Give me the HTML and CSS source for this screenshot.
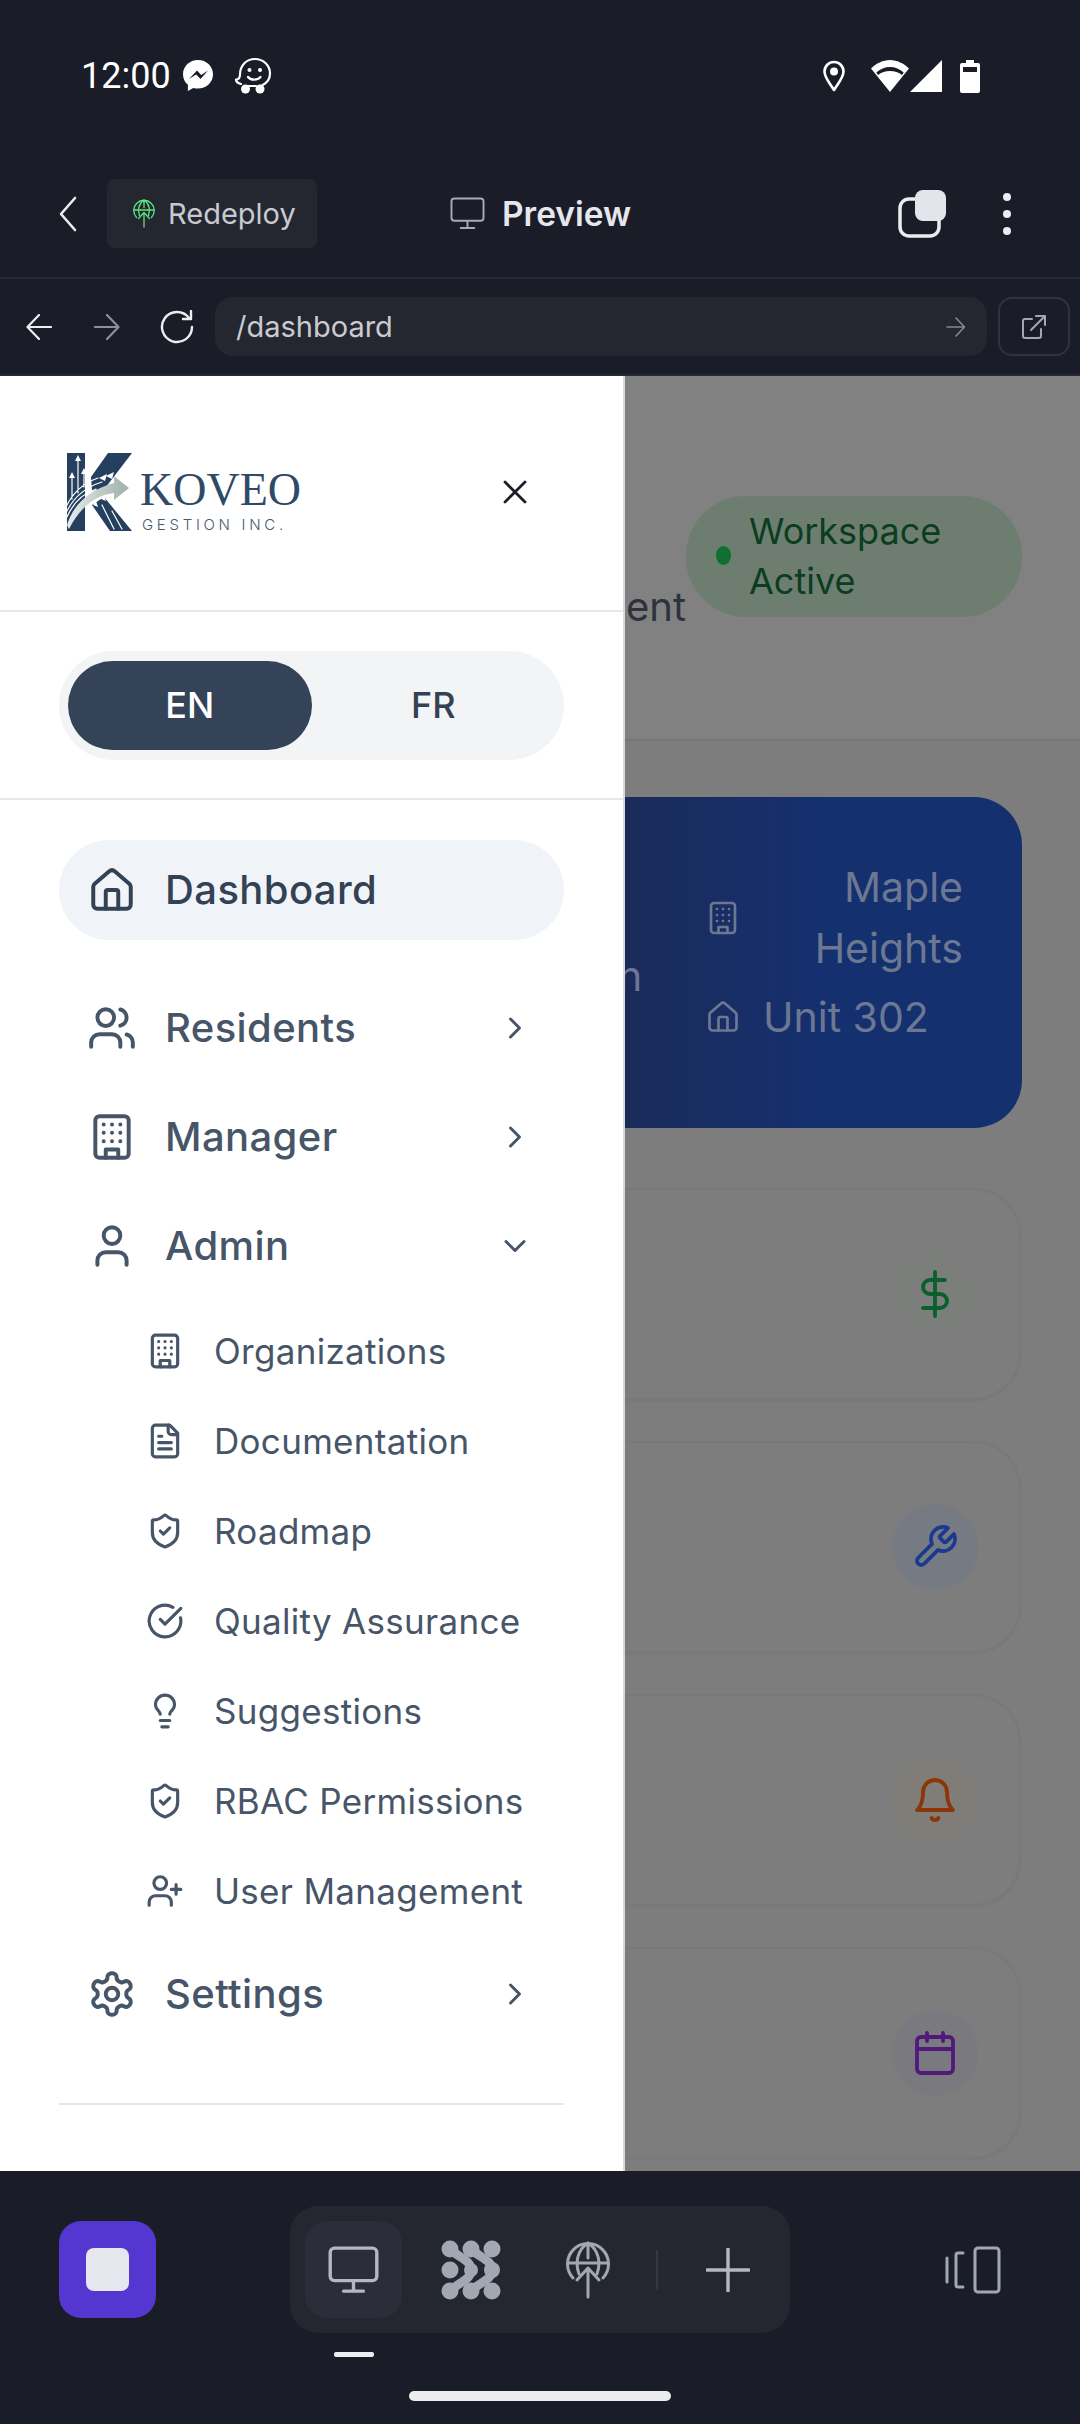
FILE: index.html
```html
<!DOCTYPE html>
<html lang="en">
<head>
  <meta charset="UTF-8">
  <title>Koveo Gestion - Preview</title>
  <meta name="viewport" content="width=device-width, initial-scale=1.0">
  <link rel="stylesheet" href="styles.css">
</head>
<body>
  <svg class="sprite" width="0" height="0">
    <symbol id="i-home" viewBox="0 0 24 24"><path d="M3 10.5a2 2 0 0 1 .7-1.5l7-6a2 2 0 0 1 2.6 0l7 6a2 2 0 0 1 .7 1.5V19a2 2 0 0 1-2 2H5a2 2 0 0 1-2-2z"/><path d="M9 21v-8a1 1 0 0 1 1-1h4a1 1 0 0 1 1 1v8"/></symbol>
    <symbol id="i-users" viewBox="0 0 24 24"><path d="M16 21v-2a4 4 0 0 0-4-4H6a4 4 0 0 0-4 4v2"/><circle cx="9" cy="7" r="4"/><path d="M22 21v-2a4 4 0 0 0-3-3.87"/><path d="M16 3.13a4 4 0 0 1 0 7.75"/></symbol>
    <symbol id="i-building" viewBox="0 0 24 24"><rect width="16" height="20" x="4" y="2" rx="2" ry="2"/><path d="M9 22v-4h6v4"/><path d="M8 6h.01M16 6h.01M12 6h.01M12 10h.01M12 14h.01M16 10h.01M16 14h.01M8 10h.01M8 14h.01"/></symbol>
    <symbol id="i-user" viewBox="0 0 24 24"><path d="M19 21v-2a4 4 0 0 0-4-4H9a4 4 0 0 0-4 4v2"/><circle cx="12" cy="7" r="4"/></symbol>
    <symbol id="i-gear" viewBox="0 0 24 24"><path d="M12.22 2h-.44a2 2 0 0 0-2 2v.18a2 2 0 0 1-1 1.73l-.43.25a2 2 0 0 1-2 0l-.15-.08a2 2 0 0 0-2.73.73l-.22.38a2 2 0 0 0 .73 2.73l.15.1a2 2 0 0 1 1 1.72v.51a2 2 0 0 1-1 1.74l-.15.09a2 2 0 0 0-.73 2.73l.22.38a2 2 0 0 0 2.73.73l.15-.08a2 2 0 0 1 2 0l.43.25a2 2 0 0 1 1 1.73V20a2 2 0 0 0 2 2h.44a2 2 0 0 0 2-2v-.18a2 2 0 0 1 1-1.73l.43-.25a2 2 0 0 1 2 0l.15.08a2 2 0 0 0 2.73-.73l.22-.39a2 2 0 0 0-.73-2.73l-.15-.08a2 2 0 0 1-1-1.74v-.5a2 2 0 0 1 1-1.74l.15-.09a2 2 0 0 0 .73-2.73l-.22-.38a2 2 0 0 0-2.73-.73l-.15.08a2 2 0 0 1-2 0l-.43-.25a2 2 0 0 1-1-1.73V4a2 2 0 0 0-2-2z"/><circle cx="12" cy="12" r="3"/></symbol>
    <symbol id="i-file" viewBox="0 0 24 24"><path d="M15 2H6a2 2 0 0 0-2 2v16a2 2 0 0 0 2 2h12a2 2 0 0 0 2-2V7Z"/><path d="M14 2v4a2 2 0 0 0 2 2h4"/><path d="M10 9H8M16 13H8M16 17H8"/></symbol>
    <symbol id="i-shield" viewBox="0 0 24 24"><path d="M20 13c0 5-3.5 7.5-7.66 8.95a1 1 0 0 1-.67-.01C7.5 20.5 4 18 4 13V6a1 1 0 0 1 1-1c2 0 4.5-1.2 6.24-2.72a1.17 1.17 0 0 1 1.52 0C14.51 3.81 17 5 19 5a1 1 0 0 1 1 1z"/><path d="m9 12 2 2 4-4"/></symbol>
    <symbol id="i-check" viewBox="0 0 24 24"><path d="M21.801 10A10 10 0 1 1 17 3.335"/><path d="m9 11 3 3L22 4"/></symbol>
    <symbol id="i-bulb" viewBox="0 0 24 24"><path d="M15 14c.2-1 .7-1.7 1.5-2.5 1-.9 1.5-2.2 1.5-3.5A6 6 0 0 0 6 8c0 1 .2 2.2 1.5 3.5.7.7 1.3 1.5 1.5 2.5"/><path d="M9 18h6M10 22h4"/></symbol>
    <symbol id="i-userplus" viewBox="0 0 24 24"><path d="M16 21v-2a4 4 0 0 0-4-4H6a4 4 0 0 0-4 4v2"/><circle cx="9" cy="7" r="4"/><path d="M19 8v6M22 11h-6"/></symbol>
    <symbol id="i-right" viewBox="0 0 24 24"><path d="m9 18 6-6-6-6"/></symbol>
    <symbol id="i-down" viewBox="0 0 24 24"><path d="m6 9 6 6 6-6"/></symbol>
    <symbol id="i-monitor" viewBox="0 0 36 34"><rect x="1.5" y="1.5" width="33" height="23" rx="3"/><path d="M18 25v6M11 32h14"/></symbol>
    <symbol id="i-deploy" viewBox="0 0 44 58"><path d="M7 37a20.500 20.500 0 1 1 30 0"/><path d="M2 22h40M22 2v15M22 2C11 9 9 22 13 33M22 2c11 7 13 20 9 31"/><path d="M22 56V28M11 39l11-12 11 12"/></symbol>
  </svg>

  <div class="phone">
    <div class="status">
      <div class="status-left">
        <span class="clock">12:00</span>
        <svg class="st-msg" viewBox="0 0 32 34"><path class="solid" d="M16 1C7.700 1 1 7.200 1 15.300c0 4.300 1.800 8 4.900 10.500V32l5.400-3c1.500.4 3.100.6 4.700.6 8.300 0 15-6.200 15-14.300S24.300 1 16 1z"/><path class="cut" d="M7 20l8-8.500 4.200 4.400L26 11.500l-7.500 8.500-4.300-4.400z"/></svg>
        <svg class="st-waze" viewBox="0 0 38 38"><path d="M7 27C3 26 2 24 2 22.500c3 0 4-1.500 4-5C6 9 12 2 21 2c8.500 0 15 6.500 15 14.500 0 5.500-3 9.500-8 12M13 29h9"/><circle class="solid" cx="11.500" cy="32" r="4.500"/><circle class="solid" cx="26" cy="32" r="4.500"/><circle class="solid" cx="15.500" cy="13" r="2"/><circle class="solid" cx="26" cy="13" r="2"/><path d="M14 20c2.500 3.500 9.500 3.500 12.500 0"/></svg>
      </div>
      <div class="status-right">
        <svg class="st-pin" viewBox="0 0 24 32"><path d="M12 30C7 22 2.500 17.500 2.500 11.500a9.500 9.500 0 0 1 19 0C21.500 17.500 17 22 12 30z"/><circle class="solid" cx="12" cy="11.500" r="4"/></svg>
        <svg class="st-wifi" viewBox="0 0 38 32"><path class="solid" d="M19 32 0 8.500C5 3.500 12 0 19 0s14 3.500 19 8.500zM19 11c-4.600 0-8.800 1.500-12 4l-1.700-2.500C9 9 14 7 19 7s10 2 13.700 5.500L31 15c-3.200-2.500-7.400-4-12-4z" fill-rule="evenodd"/></svg>
        <svg class="st-signal" viewBox="0 0 32 32"><path class="solid" d="M32 0v32H0z"/></svg>
        <svg class="st-batt" viewBox="0 0 20 33"><path class="solid" fill-rule="evenodd" d="M6 0h8v3h4a2 2 0 0 1 2 2v26a2 2 0 0 1-2 2H2a2 2 0 0 1-2-2V5a2 2 0 0 1 2-2h4zM3 7v5h14V7z"/></svg>
      </div>
    </div>

    <div class="appbar">
      <svg class="back" viewBox="0 0 20 36"><path d="M17 2 3 18l14 16"/></svg>
      <div class="redeploy">
        <svg class="redeploy-ico"><use href="#i-deploy"/></svg>
        <span>Redeploy</span>
      </div>
      <div class="app-title">
        <svg class="title-ico"><use href="#i-monitor"/></svg>
        <span>Preview</span>
      </div>
      <svg class="stack" viewBox="0 0 48 48"><rect class="stack-back" x="2" y="9" width="39" height="37" rx="9"/><rect class="solid" x="17" y="0" width="31" height="31" rx="8"/></svg>
      <div class="kebab"><i></i><i></i><i></i></div>
    </div>

    <div class="urlrow">
      <svg class="nav-arrow" viewBox="0 0 26 26"><path d="M25 13H2M13 1 1.500 13 13 25"/></svg>
      <svg class="nav-arrow dim" viewBox="0 0 26 26"><path d="M1 13h23M13 1l11.500 12L13 25"/></svg>
      <svg class="reload" viewBox="0 0 36 34"><path d="M30 8a15 15 0 1 0 3 9"/><path d="M32 1v8h-8"/></svg>
      <div class="urlbar">
        <span>/dashboard</span>
        <svg class="go" viewBox="0 0 20 20"><path d="M1 10h17M10 1l8.500 9-8.500 9"/></svg>
      </div>
      <div class="extbtn">
        <svg viewBox="0 0 26 26"><path d="M11 5H4a2 2 0 0 0-2 2v15a2 2 0 0 0 2 2h14a2 2 0 0 0 2-2v-7M10 16 24 2M15 2h9v9"/></svg>
      </div>
    </div>

    <div class="content">
      <aside class="drawer">
        <div class="drawer-head">
          <div class="logo">
            <svg class="logo-mark" viewBox="0 0 66 78">
              <defs><linearGradient id="swoosh" x1="0" x2="1" y1="0" y2="0"><stop offset="0" stop-color="#e6ebea"/><stop offset="1" stop-color="#9fb0ab"/></linearGradient></defs>
              <path class="k" d="M1 0h18v78H1zM42 0h24L40 34l-14 4-1-14zM26 52l12-8 28 34H44z"/>
              <path class="w" d="M1 58C8 44 20 34 36 29M1 52C8 38 18 30 32 25M1 64C8 48 18 40 30 36M6 46V22M12 40V6M18 34V18M40 76 28 58M48 76 36 52M56 76 46 58"/>
              <path fill="#fff" d="M12 2l-3 6h6zM6 19l-3 6h6zM18 15l-3 6h6zM27 52l3-4 2 6zM35 46l3-4 2 6zM33 25l8-4-2 7zM40 23l8-4-2 7z"/>
              <path fill="url(#swoosh)" d="M1 72C8 50 24 37 48 30v-7l15 12-15 12v-7C30 42 14 54 3 76z"/>
            </svg>
            <div class="logo-text">
              <span class="logo-name">KOVEO</span>
              <span class="logo-sub">GESTION INC.</span>
            </div>
          </div>
          <svg class="close" viewBox="0 0 24 24"><path d="M2 2l20 20M22 2 2 22"/></svg>
        </div>

        <div class="lang-wrap">
          <div class="lang">
            <span class="lang-opt active">EN</span>
            <span class="lang-opt">FR</span>
          </div>
        </div>

        <nav class="nav">
          <a class="nav-item current"><svg class="nav-ico"><use href="#i-home"/></svg><span>Dashboard</span></a>
          <a class="nav-item"><svg class="nav-ico"><use href="#i-users"/></svg><span>Residents</span><svg class="chev"><use href="#i-right"/></svg></a>
          <a class="nav-item"><svg class="nav-ico"><use href="#i-building"/></svg><span>Manager</span><svg class="chev"><use href="#i-right"/></svg></a>
          <a class="nav-item"><svg class="nav-ico"><use href="#i-user"/></svg><span>Admin</span><svg class="chev"><use href="#i-down"/></svg></a>
          <div class="subnav">
            <a class="sub-item"><svg class="sub-ico"><use href="#i-building"/></svg><span>Organizations</span></a>
            <a class="sub-item"><svg class="sub-ico"><use href="#i-file"/></svg><span>Documentation</span></a>
            <a class="sub-item"><svg class="sub-ico"><use href="#i-shield"/></svg><span>Roadmap</span></a>
            <a class="sub-item"><svg class="sub-ico"><use href="#i-check"/></svg><span>Quality Assurance</span></a>
            <a class="sub-item"><svg class="sub-ico"><use href="#i-bulb"/></svg><span>Suggestions</span></a>
            <a class="sub-item"><svg class="sub-ico"><use href="#i-shield"/></svg><span>RBAC Permissions</span></a>
            <a class="sub-item"><svg class="sub-ico"><use href="#i-userplus"/></svg><span>User Management</span></a>
          </div>
          <a class="nav-item"><svg class="nav-ico"><use href="#i-gear"/></svg><span>Settings</span><svg class="chev"><use href="#i-right"/></svg></a>
        </nav>
        <div class="drawer-rule"></div>
      </aside>

      <main class="page">
        <header class="page-head">
          <span class="page-title">ent</span>
          <div class="badge">
            <i class="badge-dot"></i>
            <span>Workspace Active</span>
          </div>
        </header>
        <div class="page-body">
          <section class="hero">
            <span class="hero-cut">n</span>
            <div class="hero-meta">
              <div class="hero-line">
                <svg class="hero-ico"><use href="#i-building"/></svg>
                <span class="hero-place">Maple Heights</span>
              </div>
              <div class="hero-line">
                <svg class="hero-ico"><use href="#i-home"/></svg>
                <span>Unit 302</span>
              </div>
            </div>
          </section>
          <div class="stat"><div class="stat-ico green"><svg viewBox="0 0 24 24"><path d="M12 1v22M17 5H9.500a3.500 3.500 0 0 0 0 7h5a3.500 3.500 0 0 1 0 7H6"/></svg></div></div>
          <div class="stat"><div class="stat-ico blue"><svg viewBox="0 0 24 24"><path d="M14.700 6.300a1 1 0 0 0 0 1.400l1.600 1.600a1 1 0 0 0 1.400 0l3.770-3.770a6 6 0 0 1-7.940 7.940l-6.910 6.910a2.120 2.120 0 0 1-3-3l6.910-6.910a6 6 0 0 1 7.940-7.940l-3.760 3.760z"/></svg></div></div>
          <div class="stat"><div class="stat-ico orange"><svg viewBox="0 0 24 24"><path d="M6 8a6 6 0 0 1 12 0c0 7 3 9 3 9H3s3-2 3-9"/><path d="M10.300 21a1.940 1.940 0 0 0 3.400 0"/></svg></div></div>
          <div class="stat"><div class="stat-ico purple"><svg viewBox="0 0 24 24"><rect x="3" y="4" width="18" height="18" rx="2"/><path d="M16 2v4M8 2v4M3 10h18"/></svg></div></div>
        </div>
      </main>
    </div>

    <div class="dockbar">
      <div class="stop"><i></i></div>
      <div class="dock-col">
        <div class="dock">
          <div class="dock-btn selected"><svg class="dock-monitor"><use href="#i-monitor"/></svg></div>
          <div class="dock-btn">
            <svg class="dock-blobs" viewBox="0 0 60 60"><path d="M9 9C18 18 30 20 30 30S18 42 9 51M30 9C39 18 51 20 51 30S39 42 30 51"/><circle cx="9" cy="9" r="8.500"/><circle cx="30" cy="9" r="8.500"/><circle cx="51" cy="9" r="8.500"/><circle cx="9" cy="30" r="8.500"/><circle cx="30" cy="30" r="7"/><circle cx="51" cy="30" r="8"/><circle cx="9" cy="51" r="8.500"/><circle cx="30" cy="51" r="8.500"/><circle cx="51" cy="51" r="8.500"/></svg>
          </div>
          <div class="dock-btn"><svg class="dock-deploy"><use href="#i-deploy"/></svg></div>
          <i class="dock-sep"></i>
          <svg class="dock-plus" viewBox="0 0 44 44"><path d="M22 1v42M1 22h42"/></svg>
        </div>
        <i class="dock-mark"></i>
      </div>
      <svg class="dock-split" viewBox="0 0 56 48"><path d="M2 12v24M18 7h-5a2 2 0 0 0-2 2v30a2 2 0 0 0 2 2h5"/><rect x="30" y="2" width="24" height="44" rx="3"/></svg>
    </div>
    <div class="homebar"><i></i></div>
  </div>
</body>
</html>
```

FILE: styles.css
```css
:root {
  --bg: #1a1d27;
  --panel: #242730;
  --line: #272a35;
  --ink: #334155;
  --ink-2: #475569;
  --text: #e6e7ec;
  --dim: #818181;
  --dim-2: #7c7d7c;
}

* {
  box-sizing: border-box;
}

body {
  margin: 0;
  font-family: Inter, 'Noto Sans', sans-serif;
  background: var(--bg);
  color: var(--text);
}

.sprite {
  position: absolute;
}

svg {
  display: block;
  flex: none;
  fill: none;
  stroke: currentColor;
  stroke-linecap: round;
  stroke-linejoin: round;
}

svg .solid {
  fill: currentColor;
  stroke: none;
}

.phone {
  width: 1080px;
  height: 2424px;
  display: flex;
  flex-direction: column;
  overflow: hidden;
}

/* status bar */
.status {
  height: 150px;
  flex: none;
  padding: 55px 100px 0 81px;
  display: flex;
  justify-content: space-between;
  align-items: flex-start;
  color: #fff;
}

.status-left,
.status-right {
  display: flex;
  align-items: center;
  height: 42px;
}

.clock {
  font-family: Roboto, sans-serif;
  font-size: 36px;
  width: 101px;
}

.st-msg {
  width: 32px;
  height: 34px;
  stroke: none;
}

.st-msg .cut {
  fill: var(--bg);
  stroke: none;
}

.st-waze {
  width: 38px;
  height: 38px;
  margin-left: 20px;
  stroke-width: 2.2;
}

.st-pin {
  width: 24px;
  height: 32px;
  stroke-width: 2.6;
}

.st-wifi {
  width: 38px;
  height: 32px;
  margin-left: 25px;
}

.st-signal {
  width: 32px;
  height: 32px;
  margin-left: 1px;
}

.st-batt {
  width: 20px;
  height: 33px;
  margin-left: 18px;
}

/* app toolbar */
.appbar {
  height: 129px;
  flex: none;
  border-bottom: 2px solid var(--line);
  padding: 0 69px 0 58px;
  display: flex;
  align-items: center;
}

.back {
  width: 20px;
  height: 36px;
  stroke-width: 2.6;
  color: #ecedf0;
}

.redeploy {
  width: 210px;
  height: 69px;
  margin-left: 29px;
  padding-left: 26px;
  display: flex;
  align-items: center;
  gap: 13px;
  background: var(--panel);
  border-radius: 8px;
  font-size: 29px;
  color: #c8cad0;
}

.redeploy-ico {
  width: 22px;
  height: 29px;
  stroke-width: 2.6;
  color: #5fe37e;
}

.app-title {
  margin-left: 133px;
  display: flex;
  align-items: center;
  gap: 17px;
  font-size: 33.5px;
  font-weight: 600;
}

.title-ico {
  width: 35px;
  height: 33px;
  stroke-width: 2;
  color: #a7abb3;
}

.stack {
  width: 48px;
  height: 48px;
  margin-left: auto;
  color: #e3e5ea;
  stroke-width: 3.5;
}

.stack-back {
  color: #ecedf0;
}

.kebab {
  width: 8px;
  margin-left: 57px;
  display: flex;
  flex-direction: column;
  gap: 9px;
}

.kebab i {
  height: 8px;
  border-radius: 50%;
  background: #ecedf0;
}

/* url row */
.urlrow {
  height: 97px;
  flex: none;
  border-bottom: 2px solid var(--line);
  padding: 18px 10px 18px 26px;
  display: flex;
  align-items: center;
}

.nav-arrow {
  width: 26px;
  height: 26px;
  margin-right: 42px;
  stroke-width: 2.2;
  color: #eceef1;
}

.nav-arrow.dim {
  color: #8d9098;
  margin-right: 39px;
}

.reload {
  width: 36px;
  height: 34px;
  stroke-width: 2.4;
  color: #eceef1;
}

.urlbar {
  width: 772px;
  height: 59px;
  margin-left: 20px;
  padding: 0 21px;
  display: flex;
  align-items: center;
  justify-content: space-between;
  background: var(--panel);
  border-radius: 18px;
  font-size: 29px;
  color: #c9cbd1;
}

.go {
  width: 20px;
  height: 20px;
  stroke-width: 1.6;
  color: #85888f;
}

.extbtn {
  width: 72px;
  height: 59px;
  margin-left: 11px;
  display: flex;
  align-items: center;
  justify-content: center;
  border: 2px solid #30333e;
  border-radius: 14px;
  color: #a5a8af;
}

.extbtn svg {
  width: 26px;
  height: 26px;
  stroke-width: 2;
}

/* body split: drawer + dimmed page */
.content {
  height: 1795px;
  flex: none;
  display: flex;
}

.drawer {
  width: 625px;
  flex: none;
  background: #fff;
  border-right: 2px solid #d9dae0;
  display: flex;
  flex-direction: column;
}

.drawer-head {
  height: 236px;
  flex: none;
  padding: 0 96px 2px 66px;
  border-bottom: 2px solid #e7e7ec;
  display: flex;
  align-items: center;
  justify-content: space-between;
}

.logo {
  display: flex;
  align-items: flex-end;
  gap: 8px;
}

.logo-mark {
  width: 66px;
  height: 78px;
  stroke: none;
}

.logo-mark .k {
  fill: #25405f;
}

.logo-mark .w {
  fill: none;
  stroke: #fff;
  stroke-width: 1.2;
}

.logo-text {
  width: 160px;
  margin-bottom: -3px;
  display: flex;
  flex-direction: column;
}

.logo-name {
  font-family: 'Liberation Serif', serif;
  font-size: 46px;
  line-height: 53px;
  color: #2f4a68;
}

.logo-sub {
  font-family: Inter, sans-serif;
  font-weight: 300;
  font-size: 15px;
  line-height: 18px;
  letter-spacing: 3.7px;
  color: #46596d;
  padding-left: 2px;
  white-space: nowrap;
}

.close {
  width: 24px;
  height: 24px;
  stroke-width: 2.8;
  color: #1b1f27;
}

.lang-wrap {
  height: 188px;
  flex: none;
  padding: 39px 59px 0;
  border-bottom: 2px solid #e7e7ec;
}

.lang {
  height: 109px;
  padding: 10px 9px;
  display: flex;
  background: #f2f4f6;
  border-radius: 55px;
}

.lang-opt {
  flex: 1;
  display: flex;
  align-items: center;
  justify-content: center;
  padding-bottom: 2px;
  border-radius: 45px;
  font-size: 36px;
  font-weight: 450;
  color: var(--ink);
}

.lang-opt.active {
  background: #344357;
  color: #fff;
}

.nav {
  padding: 40px 59px 0;
  display: flex;
  flex-direction: column;
  gap: 9px;
}

.nav-item {
  height: 100px;
  flex: none;
  padding: 0 31px 0 28px;
  display: flex;
  align-items: center;
  gap: 28px;
  font-size: 40px;
  font-weight: 450;
  letter-spacing: 0.4px;
  color: var(--ink-2);
}

.nav-item span {
  margin-top: -2px;
}

.nav-item.current {
  background: #f0f4f9;
  border-radius: 50px;
  color: var(--ink);
  margin-bottom: 29px;
}

.nav-ico {
  width: 50px;
  height: 50px;
  stroke-width: 1.9;
}

.chev {
  width: 36px;
  height: 36px;
  margin-left: auto;
  stroke-width: 2;
}

.subnav {
  margin: 5px 0 4px;
  display: flex;
  flex-direction: column;
  gap: 9px;
}

.sub-item {
  height: 81px;
  flex: none;
  padding-left: 87px;
  display: flex;
  align-items: center;
  gap: 30px;
  font-size: 35px;
  letter-spacing: 0.3px;
  color: var(--ink-2);
}

.sub-ico {
  width: 38px;
  height: 38px;
  stroke-width: 2;
}

.drawer-rule {
  height: 2px;
  flex: none;
  margin: 59px 59px 0;
  background: #e5e6ea;
}

.page {
  flex: 1;
  min-width: 0;
  background: var(--dim-2);
  display: flex;
  flex-direction: column;
}

.page-head {
  height: 365px;
  flex: none;
  padding: 120px 58px 0 1px;
  background: var(--dim);
  border-bottom: 2px solid #757674;
  display: flex;
  align-items: flex-start;
}

.page-title {
  align-self: flex-start;
  margin-top: 87px;
  width: 60px;
  font-size: 40px;
  line-height: 48px;
  color: #2d323c;
}

.badge {
  width: 337px;
  height: 121px;
  padding: 0 0 2px 30px;
  display: flex;
  align-items: center;
  gap: 18px;
  background: #6d7d70;
  border-radius: 60px;
  font-size: 36px;
  line-height: 50px;
  color: #0c3d20;
}

.badge-dot {
  width: 15px;
  height: 19px;
  flex: none;
  border-radius: 50%;
  background: #11702f;
}

.badge span {
  width: 200px;
}

.page-body {
  padding: 56px 58px 0 0;
  display: flex;
  flex-direction: column;
  gap: 41px;
}

.hero {
  height: 331px;
  margin-bottom: 19px;
  padding: 0 59px 0 0;
  overflow: hidden;
  background: linear-gradient(90deg, #1a2b5a, #15306f 50%);
  border-radius: 0 48px 48px 0;
  display: flex;
  align-items: center;
  justify-content: space-between;
  font-size: 41px;
  color: #6c7892;
}

.hero-cut {
  align-self: flex-end;
  margin: 0 0 127px -7px;
}

.hero-meta {
  width: 258px;
  margin-bottom: 26px;
  display: flex;
  flex-direction: column;
  gap: 13px;
}

.hero-line {
  display: flex;
  align-items: center;
  gap: 22px;
}

.hero-ico {
  width: 36px;
  height: 36px;
  stroke-width: 1.8;
}

.hero-place {
  flex: 1;
  text-align: right;
  line-height: 61px;
}

.stat {
  height: 212px;
  flex: none;
  margin-right: 1px;
  padding-right: 41px;
  background: var(--dim-2);
  border: 2px solid #767a7d;
  border-left: 0;
  border-radius: 0 48px 48px 0;
  box-shadow: 0 1px 3px rgba(0, 0, 0, 0.05);
  display: flex;
  align-items: center;
  justify-content: flex-end;
}

.stat-ico {
  width: 86px;
  height: 86px;
  border-radius: 50%;
  display: flex;
  align-items: center;
  justify-content: center;
}

.stat-ico svg {
  width: 48px;
  height: 48px;
  stroke-width: 1.9;
}

.green {
  background: #7b7e7b;
  color: #0a5f2c;
}

.blue {
  background: #767a82;
  color: #1a3a8f;
}

.orange {
  background: #807c77;
  color: #8a3606;
}

.purple {
  background: #7b7980;
  color: #4f1a7a;
}

/* bottom dock */
.dockbar {
  height: 200px;
  flex: none;
  padding: 35px 79px 0 59px;
  display: flex;
  align-items: flex-start;
}

.stop {
  width: 97px;
  height: 97px;
  margin-top: 15px;
  display: flex;
  align-items: center;
  justify-content: center;
  background: #5436d0;
  border-radius: 22px;
}

.stop i {
  width: 43px;
  height: 43px;
  border-radius: 8px;
  background: #e6e6ee;
}

.dock-col {
  width: 500px;
  margin-left: 134px;
  display: flex;
  flex-direction: column;
}

.dock {
  height: 127px;
  padding: 0 42px 0 15px;
  display: flex;
  align-items: center;
  background: var(--panel);
  border-radius: 28px;
  color: #a2a8b2;
}

.dock-btn {
  width: 97px;
  height: 97px;
  flex: none;
  margin-right: 20px;
  display: flex;
  align-items: center;
  justify-content: center;
  border-radius: 22px;
}

.dock-btn.selected {
  background: #2b2d39;
  color: #b5b8c0;
}

.dock-monitor {
  width: 53px;
  height: 48px;
  stroke-width: 2.4;
}

.dock-blobs {
  width: 60px;
  height: 60px;
  stroke-width: 9;
  stroke-linecap: butt;
}

.dock-blobs circle {
  fill: currentColor;
  stroke: none;
}

.dock-deploy {
  width: 44px;
  height: 58px;
  stroke-width: 3;
}

.dock-sep {
  width: 2px;
  height: 39px;
  flex: none;
  background: #353843;
}

.dock-plus {
  width: 44px;
  height: 44px;
  margin-left: 48px;
  stroke-width: 3.4;
  color: #b5b8c0;
}

.dock-mark {
  width: 40px;
  height: 5px;
  margin: 19px 0 0 44px;
  border-radius: 2px;
  background: #eceef1;
}

.dock-split {
  width: 56px;
  height: 48px;
  margin: 40px 0 0 auto;
  stroke-width: 3;
  color: #a2a8b2;
}

.homebar {
  flex: 1;
  display: flex;
  justify-content: center;
  padding-top: 20px;
}

.homebar i {
  width: 262px;
  height: 10px;
  border-radius: 5px;
  background: #ececee;
}
```
